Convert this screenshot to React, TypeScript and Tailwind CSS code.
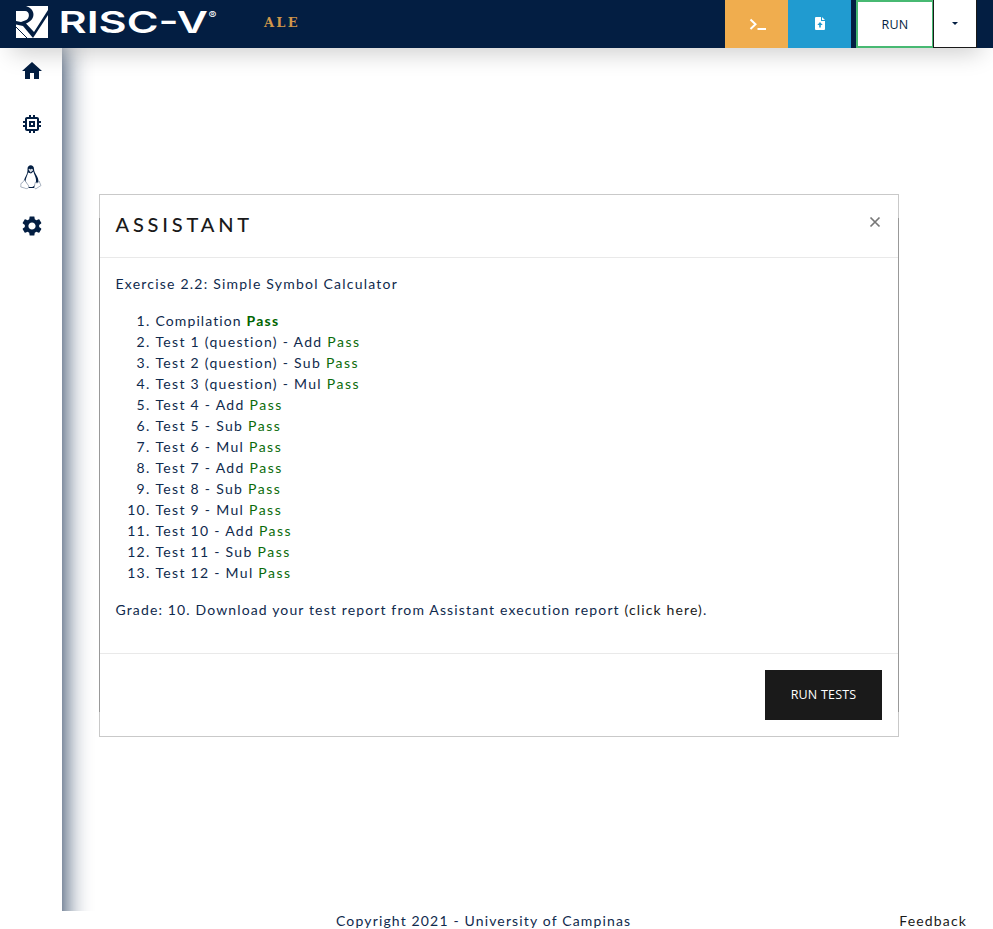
import React from "react";

const tests = [
  "Test 1 (question) - Add",
  "Test 2 (question) - Sub",
  "Test 3 (question) - Mul",
  "Test 4 - Add",
  "Test 5 - Sub",
  "Test 6 - Mul",
  "Test 7 - Add",
  "Test 8 - Sub",
  "Test 9 - Mul",
  "Test 10 - Add",
  "Test 11 - Sub",
  "Test 12 - Mul",
];

function Logo() {
  return (
    <svg width="210" height="48" viewBox="0 -6 210 48" className="block" fill="#fff">
      <path d="M0 5H9C14 5 14.500 13 9 14.500L5 16L0 15Z" />
      <path d="M0 18.500L7 20L17 32H0Z" />
      <path d="M10 0H32V4L18 26L10 17.500C20 14 20 3 10 0Z" />
      <path d="M32 9V32H17Z" />
      <path d="M0 21L11 32" stroke="#031e42" strokeWidth="1" />
      <text x="42.500" y="27" fontFamily="Inter, sans-serif" fontWeight="600" fontSize="30" letterSpacing="0" textLength="149.500" lengthAdjust="spacingAndGlyphs">RISC-V</text>
      <text x="192.500" y="13" fontFamily="Inter, sans-serif" fontSize="10" letterSpacing="0" textLength="8" lengthAdjust="spacingAndGlyphs">®</text>
    </svg>
  );
}

function Navbar() {
  return (
    <header className="relative z-20 flex h-12 shrink-0 bg-[#031e42] pr-4 shadow-[0_16px_24px_-12px_rgba(0,0,0,0.22)]">
      <div className="pl-4"><Logo /></div>
      <div className="pt-[13px] pl-[38px] font-['DejaVu_Serif',serif] text-[13px] leading-5 font-bold tracking-[2.2px] text-[#d0964a]">ALE</div>
      <div className="ml-auto flex">
        <button className="flex w-[63px] items-center justify-center bg-[#f0ad4e]">
          <svg width="18" height="13" viewBox="0 0 18 13" fill="none" stroke="#fff" strokeWidth="2" className="ml-[3px]">
            <path d="M1.500 1.500L6.500 6.300L1.500 11M8.500 11H17" />
          </svg>
        </button>
        <button className="flex w-[63px] items-center justify-center bg-[#209bd0]">
          <svg width="10" height="13" viewBox="0 0 10 13" className="-mt-[1px]">
            <path d="M1 0H6V4H10V12Q10 13 9 13H1Q0 13 0 12V1Q0 0 1 0ZM7 0L10 3H7Z" fill="#fff" />
            <path d="M5 5L7.700 8H5.800V10.500H4.200V8H2.300Z" fill="#209bd0" />
          </svg>
        </button>
        <button className="ml-[5px] w-[78px] border-2 border-[#47b972] bg-white font-['Open_Sans',sans-serif] text-[12.5px] font-medium tracking-[0.2px] text-[#031e42]">RUN</button>
        <button className="-ml-px flex w-[44px] items-center justify-center border border-t-0 border-[#1a1a1a] bg-white">
          <span className="border-x-[3px] border-t-[3px] border-x-transparent border-t-[#031e42]" />
        </button>
      </div>
    </header>
  );
}

function Sidebar() {
  return (
    <nav className="relative flex h-[900px] w-[62px] shrink-0 flex-col items-center bg-white pt-[11px] text-[#031e42] shadow-[0_0_28px_#031e42]">
      <svg width="24" height="24" viewBox="0 0 24 24" fill="currentColor" className="ml-[2px]">
        <path d="M10 20v-6h4v6h5v-8h3L12 3 2 12h3v8z" />
      </svg>
      <svg width="24" height="24" viewBox="0 0 24 24" fill="currentColor" className="mt-[29px] ml-[2px]">
        <path d="M15 9H9v6h6V9zm-2 4h-2v-2h2v2zm8-2V9h-2V7c0-1.100-.9-2-2-2h-2V3h-2v2h-2V3H9v2H7c-1.100 0-2 .9-2 2v2H3v2h2v2H3v2h2v2c0 1.100.9 2 2 2h2v2h2v-2h2v2h2v-2h2c1.100 0 2-.9 2-2v-2h2v-2h-2v-2h2zm-4 6H7V7h10v10z" />
      </svg>
      <svg width="22" height="26" viewBox="0 0 22 26" className="mt-[28px] -ml-[1px]">
        <path d="M7.500 5C7.500 0 14 0 14 5C14 10 19 12 18.500 19L15 23H7L4 18C4 13 8 11 7.500 5Z" fill="#031e42" />
        <path d="M8 8.500L11 9.500L13.500 7.500C14 11 16.500 13 16 18C15.500 21 13 23.500 10.500 23.500C8 23.500 7 20 5.500 17C6 13 7.500 12 8 8.500Z" fill="#fff" />
        <path d="M8.500 5.500C9 4 10 5 10.500 5.500C12 4 13 5 13 6.500L10.500 8.500Z" fill="#d8dde4" />
        <path d="M4.500 16L8.800 22C9 25 6 25 4.500 24L.8 23C1 21 .3 19 2 19ZM15.500 18C17 20 19 18 19 17L21 21.500L16 24.700C13.500 25 14.500 21 15.500 18Z" fill="#fff" stroke="#8290a5" strokeWidth=".7" />
        <path d="M8.800 23.500H14" stroke="#031e42" strokeWidth="1" />
      </svg>
      <svg width="24" height="24" viewBox="0 0 24 24" fill="currentColor" className="mt-[24px] ml-[2px]">
        <path d="M19.140 12.940c.04-.3.060-.61.060-.94 0-.32-.02-.64-.07-.94l2.030-1.580c.18-.14.230-.41.120-.61l-1.920-3.320c-.12-.22-.37-.29-.59-.22l-2.390.96c-.5-.38-1.030-.7-1.620-.94l-.36-2.540c-.04-.24-.24-.41-.48-.41h-3.840c-.24 0-.43.170-.47.410l-.36 2.540c-.59.240-1.130.570-1.620.940l-2.390-.96c-.22-.08-.47 0-.59.220L2.740 8.870c-.12.210-.08.470.120.610l2.030 1.580c-.05.300-.09.630-.09.940s.02.640.07.940l-2.030 1.580c-.18.140-.23.410-.12.610l1.920 3.320c.12.220.37.290.59.220l2.390-.96c.5.380 1.030.7 1.620.940l.36 2.540c.05.240.24.410.48.410h3.840c.24 0 .44-.17.47-.41l.36-2.540c.59-.24 1.130-.56 1.620-.94l2.390.96c.22.080.47 0 .59-.22l1.920-3.320c.12-.22.070-.47-.12-.61l-2.010-1.580zM12 15.600c-1.980 0-3.600-1.620-3.600-3.600s1.620-3.600 3.600-3.600 3.600 1.620 3.600 3.600-1.620 3.600-3.600 3.600z" />
      </svg>
    </nav>
  );
}

function Assistant() {
  return (
    <section className="relative mt-[146px] ml-[37px] flex h-[543px] w-[800px] flex-col border border-[#c9c9c9] bg-white">
      <span className="absolute top-[23px] -left-px h-[494px] w-px bg-[#999]" />
      <span className="absolute top-[23px] -right-px h-[494px] w-px bg-[#999]" />
      <header className="flex h-[63px] shrink-0 justify-between border-b border-[#e9e9e9] pr-[17px] pl-[15.5px]">
        <h1 className="pt-[15px] text-[20px] leading-7 font-medium tracking-[3.8px] text-[#1a1a1a]">ASSISTANT</h1>
        <svg width="12" height="12" viewBox="0 0 12 12" stroke="#777" strokeWidth="1.700" className="mt-[21px]">
          <path d="M1.500 1.500L10.500 10.500M10.500 1.500L1.500 10.500" />
        </svg>
      </header>
      <div className="flex-1 pt-[15px] pl-[15.5px]">
        <p className="tracking-[1.22px]">Exercise 2.2: Simple Symbol Calculator</p>
        <ol className="my-4 list-decimal pl-10 tracking-[1.29px]">
          <li><span className="tracking-[1.1px]">Compilation </span><b className="tracking-[1.3px] text-[#006400]">Pass</b></li>
          {tests.map((t) => (
            <li key={t}>{t} <span className="tracking-[1.5px] text-[#0a6b0a]">Pass</span></li>
          ))}
        </ol>
        <p className="tracking-[1.135px]">Grade: 10. Download your test report from Assistant execution report <a className="text-[#1a1a1a]">(click here)</a>.</p>
      </div>
      <footer className="flex h-[83px] shrink-0 items-start justify-end border-t border-[#e9e9e9] pt-4 pr-4">
        <button className="h-[50px] w-[117px] bg-[#1a1a1a] pb-[2px] font-['Open_Sans',sans-serif] text-[12.5px] font-medium tracking-[0.2px] text-white">RUN TESTS</button>
      </footer>
    </section>
  );
}

export default function App() {
  return (
    <div className="flex h-[929px] w-[993px] flex-col overflow-hidden bg-white font-['Lato',sans-serif] text-[14px] leading-[21px] tracking-[1px] text-[#0f2a4d]">
      <Navbar />
      <main className="flex h-[863px] shrink-0 items-start overflow-hidden">
        <Sidebar />
        <Assistant />
      </main>
      <footer className="-mt-px flex h-[19px] shrink-0 justify-between pr-[26px] pl-[336px]">
        <span className="tracking-[1.15px]">Copyright 2021 - University of Campinas</span>
        <a className="tracking-[1.15px] text-[#1a1a1a]">Feedback</a>
      </footer>
    </div>
  );
}
